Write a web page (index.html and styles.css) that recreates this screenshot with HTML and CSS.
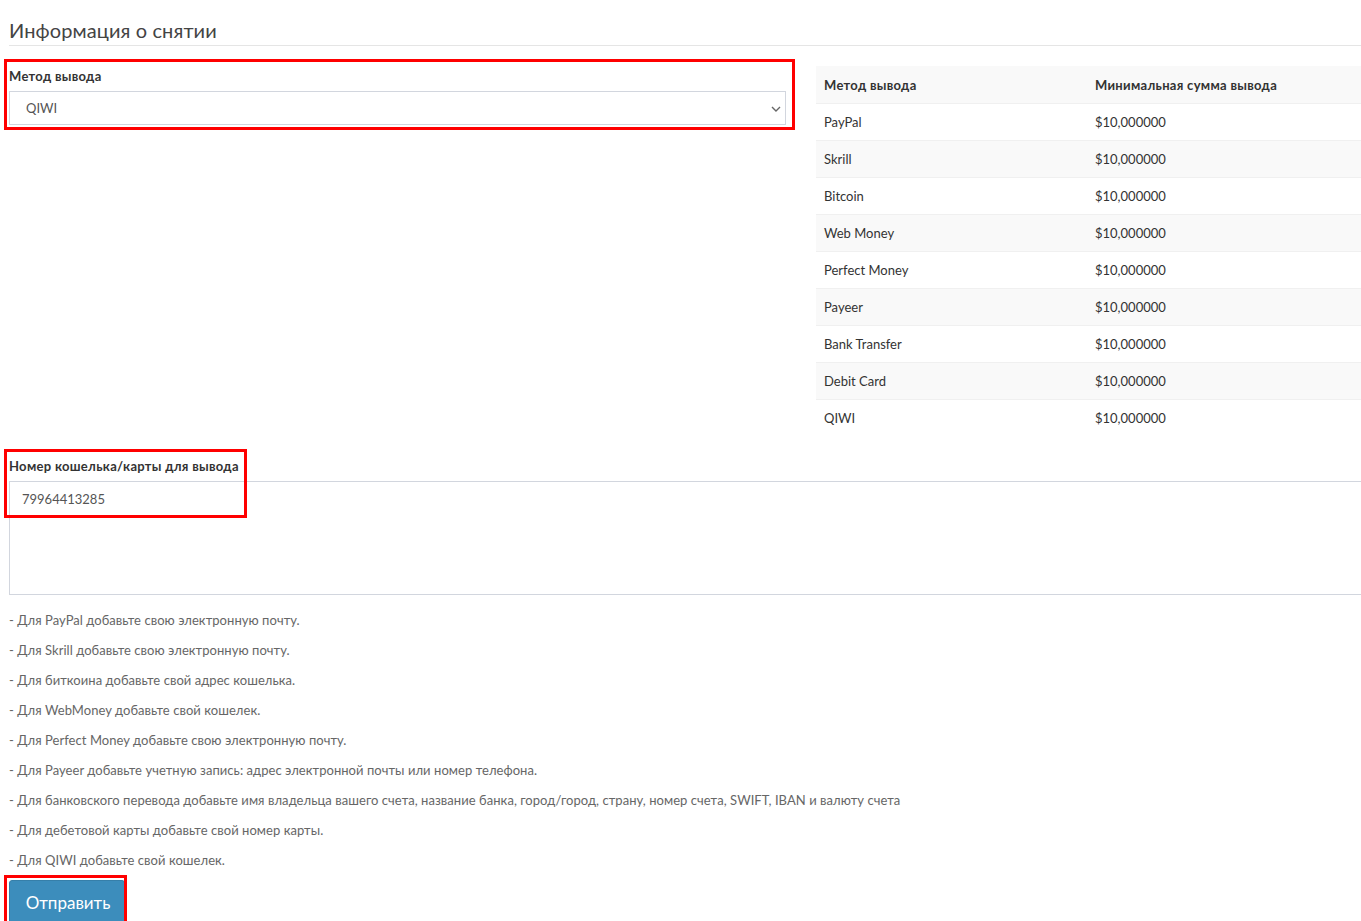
FILE: index.html
```html
<!DOCTYPE html>
<html lang="ru">
<head>
<meta charset="utf-8">
<title>Информация о снятии</title>
<link rel="stylesheet" href="styles.css">
</head>
<body>
<div class="page">
  <h3 class="title">Информация о снятии</h3>
  <div class="row">
    <div class="col-left">
      <div class="group hl hl-method">
        <label class="lbl">Метод вывода</label>
        <div class="select">
          <span>QIWI</span>
          <svg class="chev" width="10" height="6" viewBox="0 0 10 6"><path d="M1 1l4 4 4-4" fill="none" stroke="#666" stroke-width="1.4"/></svg>
        </div>
      </div>
    </div>
    <div class="col-right">
      <table class="tbl">
        <thead>
          <tr><th>Метод вывода</th><th>Минимальная сумма вывода</th></tr>
        </thead>
        <tbody>
          <tr><td>PayPal</td><td>$10,000000</td></tr>
          <tr><td>Skrill</td><td>$10,000000</td></tr>
          <tr><td>Bitcoin</td><td>$10,000000</td></tr>
          <tr><td>Web Money</td><td>$10,000000</td></tr>
          <tr><td>Perfect Money</td><td>$10,000000</td></tr>
          <tr><td>Payeer</td><td>$10,000000</td></tr>
          <tr><td>Bank Transfer</td><td>$10,000000</td></tr>
          <tr><td>Debit Card</td><td>$10,000000</td></tr>
          <tr><td>QIWI</td><td>$10,000000</td></tr>
        </tbody>
      </table>
    </div>
  </div>
  <div class="group wallet hl hl-wallet">
    <label class="lbl">Номер кошелька/карты для вывода</label>
    <div class="textarea">79964413285</div>
  </div>
  <div class="help">
    <p>- Для PayPal добавьте свою электронную почту.</p>
    <p>- Для Skrill добавьте свою электронную почту.</p>
    <p>- Для биткоина добавьте свой адрес кошелька.</p>
    <p>- Для WebMoney добавьте свой кошелек.</p>
    <p>- Для Perfect Money добавьте свою электронную почту.</p>
    <p>- Для Payeer добавьте учетную запись: адрес электронной почты или номер телефона.</p>
    <p>- Для банковского перевода добавьте имя владельца вашего счета, название банка, город/город, страну, номер счета, SWIFT, IBAN и валюту счета</p>
    <p>- Для дебетовой карты добавьте свой номер карты.</p>
    <p>- Для QIWI добавьте свой кошелек.</p>
  </div>
  <div class="btn-wrap hl hl-btn">
    <button class="btn">Отправить</button>
  </div>
</div>
</body>
</html>
```

FILE: styles.css
```css
html, body {
  margin: 0;
  padding: 0;
  background: #fff;
  overflow: hidden;
}
body {
  font-family: "Lato", "Noto Sans", sans-serif;
  font-size: 13px;
  color: #333;
}
.page {
  width: 1400px;
  padding: 18px 0 0 9px;
}
.title {
  margin: 0;
  font-size: 20px;
  line-height: 24px;
  font-weight: 400;
  color: #444;
  letter-spacing: 0.1px;
  padding-bottom: 3px;
  border-bottom: 1px solid #e5e5e5;
}
.row {
  display: flex;
  gap: 30px;
  margin-top: 20px;
}
.col-left {
  width: 777px;
  flex: none;
}
.col-right {
  flex: 1;
}
.group {
  position: relative;
}
.hl-method {
  padding-top: 1px;
}
.lbl {
  display: block;
  font-weight: 700;
  line-height: 18px;
  color: #333;
  letter-spacing: 0.3px;
  margin-bottom: 6px;
}
.select {
  position: relative;
  height: 34px;
  box-sizing: border-box;
  border: 1px solid #d2d6de;
  display: flex;
  align-items: center;
  padding-left: 16px;
  color: #555;
}
.chev {
  position: absolute;
  right: 4px;
  top: 14px;
}
.hl::after {
  content: "";
  position: absolute;
  border: 3px solid #f00;
  pointer-events: none;
  z-index: 2;
}
.hl-method::after {
  left: -5px;
  right: -9px;
  top: -7px;
  bottom: -5px;
}
.tbl {
  width: 100%;
  border-collapse: collapse;
}
.tbl th, .tbl td {
  text-align: left;
  padding: 8px 8px;
  line-height: 20px;
  border-top: 1px solid #f0f0f0;
}
.tbl th {
  font-weight: 700;
  border-top: none;
  height: 37px;
  box-sizing: border-box;
  padding-top: 9px;
  letter-spacing: 0.3px;
}
.tbl th:first-child, .tbl td:first-child {
  width: 255px;
}
.tbl thead tr {
  background: #f9f9f9;
}
.tbl tbody tr:nth-child(even) {
  background: #f9f9f9;
}
.wallet {
  margin-top: 21px;
}
.hl-wallet::after {
  left: -5px;
  top: -8px;
  width: 243px;
  height: 69px;
  box-sizing: border-box;
}
.textarea {
  height: 114px;
  box-sizing: border-box;
  border: 1px solid #d2d6de;
  padding: 8px 12px 7px;
  line-height: 18px;
  color: #555;
}
.help {
  margin-top: 15px;
  color: #666;
  letter-spacing: 0.05px;
}
.help p {
  margin: 0 0 10px;
  line-height: 20px;
}
.btn-wrap {
  position: relative;
  display: inline-block;
}
.btn {
  display: block;
  background: #3c8dbc;
  color: #fff;
  border: 1px solid #367fa9;
  border-radius: 3px;
  width: 116px;
  height: 46px;
  font-family: inherit;
  font-size: 17px;
  padding: 0 0 0 2px;
  line-height: 44px;
}
.hl-btn::after {
  left: -5px;
  right: -2px;
  top: -5px;
  bottom: 2px;
}
```
